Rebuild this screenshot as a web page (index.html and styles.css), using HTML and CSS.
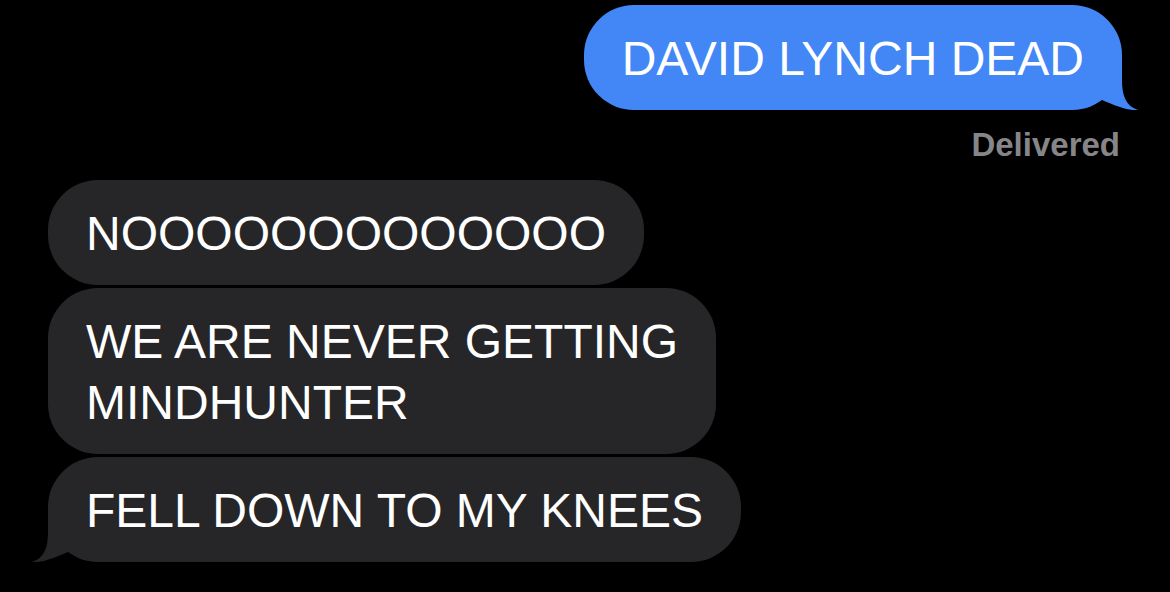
FILE: index.html
```html
<!DOCTYPE html>
<html>
<head>
    <title>Messages</title>
    <link rel="stylesheet" href="styles.css">
</head>
<body>
    <div class="thread">
        <div class="bubble out">
            DAVID LYNCH DEAD
            <svg class="tail" viewBox="0 0 40 50"><path d="M0 0 L24 0 L24 20 C24 36 28 46 40 50 C32 51 20 47 4 40 L0 40 Z"/></svg>
        </div>
        <div class="status">Delivered</div>

        <div class="group">
            <div class="bubble in">NOOOOOOOOOOOOO</div>
            <div class="bubble in">WE ARE NEVER GETTING<br>MINDHUNTER</div>
            <div class="bubble in">
                FELL DOWN TO MY KNEES
                <svg class="tail" viewBox="0 0 40 50"><path d="M0 0 L24 0 L24 20 C24 36 28 46 40 50 C32 51 20 47 4 40 L0 40 Z"/></svg>
            </div>
        </div>
    </div>
</body>
</html>
```

FILE: styles.css
```css
body {
    margin: 0;
    background-color: #000;
    font-family: "Liberation Sans", Arial, sans-serif;
}
.thread {
    display: flex;
    flex-direction: column;
    padding: 5px 48px 0;
}
.bubble {
    position: relative;
    font-size: 48px;
    line-height: 61px;
    color: #fff;
    padding: 23px 38px 21px;
    border-radius: 50px;
    white-space: nowrap;
}
.bubble.out {
    align-self: flex-end;
    background-color: #4287f5;
}
.bubble.in {
    background-color: #262628;
}
.status {
    align-self: flex-end;
    margin: 17px 2px 17px 0;
    font-size: 33px;
    line-height: 36px;
    font-weight: bold;
    color: #86868a;
}
.group {
    display: flex;
    flex-direction: column;
    align-items: flex-start;
    gap: 3px;
}
.tail {
    position: absolute;
    bottom: 0;
    width: 40px;
    height: 50px;
}
.out .tail {
    right: -16px;
}
.out .tail path {
    fill: #4287f5;
}
.in .tail {
    left: -16px;
    transform: scaleX(-1);
}
.in .tail path {
    fill: #262628;
}
```
